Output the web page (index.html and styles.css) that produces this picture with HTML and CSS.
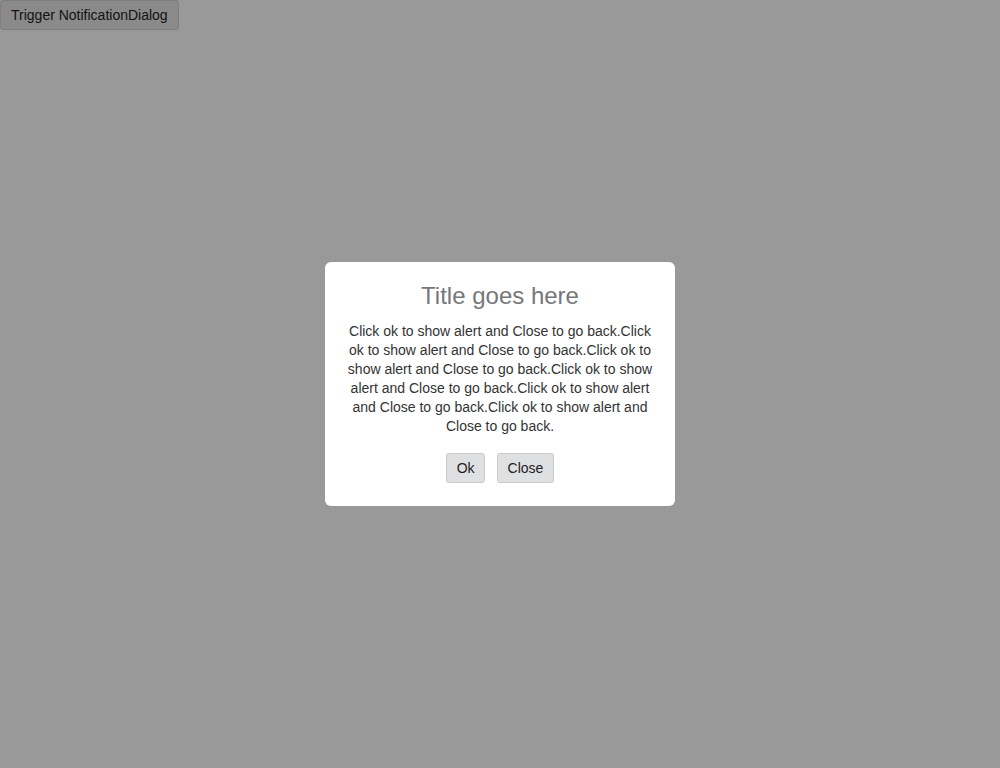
FILE: index.html
```html
<!DOCTYPE html>
<html>
<head>
<meta charset="utf-8">
<link rel="stylesheet" href="styles.css">
</head>
<body>
<button class="btn trigger">Trigger NotificationDialog</button>
<div class="overlay">
  <div class="dialog">
    <h2 class="title">Title goes here</h2>
    <p class="message">Click ok to show alert and Close to go back.Click ok to show alert and Close to go back.Click ok to show alert and Close to go back.Click ok to show alert and Close to go back.Click ok to show alert and Close to go back.Click ok to show alert and Close to go back.</p>
    <div class="actions">
      <button class="btn">Ok</button>
      <button class="btn">Close</button>
    </div>
  </div>
</div>
</body>
</html>
```
FILE: styles.css
```css
html, body {
  margin: 0;
  padding: 0;
  height: 100%;
  background: #fff;
  font-family: "Liberation Sans", Arial, sans-serif;
}
.btn {
  font-family: "Liberation Sans", Arial, sans-serif;
  font-size: 14px;
  color: #222;
  background: #dfe0e2;
  border: 1px solid #c9cacc;
  border-radius: 3px;
  height: 30px;
  padding: 0 9.5px;
  margin: 0;
  cursor: pointer;
}
.trigger {
  display: block;
  padding: 0 10px;
  background: #e6e6e6;
  border-color: #d2d2d2;
}
.overlay {
  position: fixed;
  inset: 0;
  background: rgba(0, 0, 0, 0.4);
  display: flex;
  align-items: center;
  justify-content: center;
}
.dialog {
  width: 350px;
  box-sizing: border-box;
  background: #fff;
  border-radius: 6px;
  padding: 20px 22px 23px;
  text-align: center;
}
.title {
  margin: 0;
  font-size: 24px;
  font-weight: normal;
  line-height: 28px;
  color: #76777b;
}
.message {
  margin: 12px 0 0;
  font-size: 14px;
  line-height: 19px;
  color: #333;
}
.actions {
  margin-top: 17px;
  display: flex;
  justify-content: center;
  gap: 12px;
}
```
